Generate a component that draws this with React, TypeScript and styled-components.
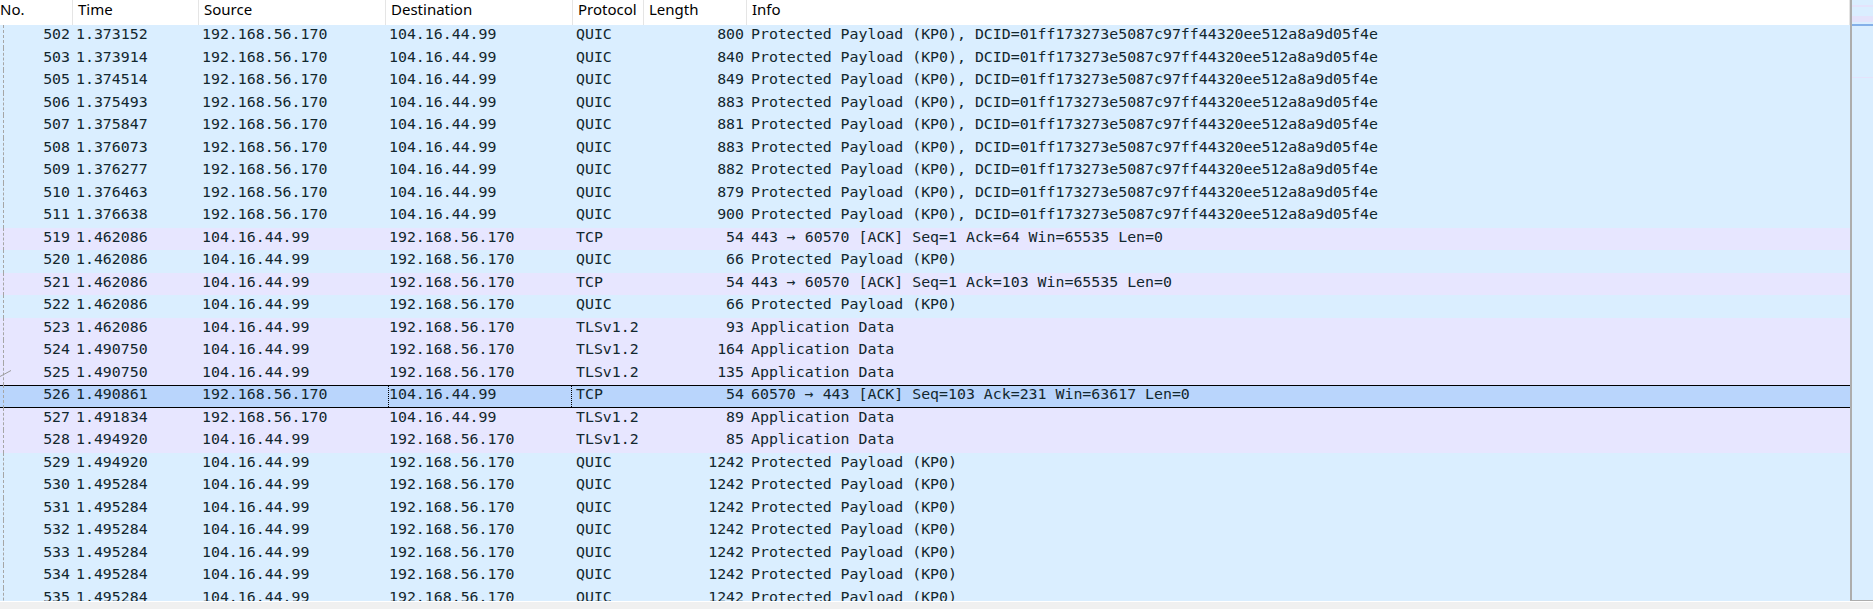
import styled, { createGlobalStyle } from 'styled-components'

const GlobalStyle = createGlobalStyle`
  html, body {
    margin: 0;
    padding: 0;
    background: #ffffff;
  }
  body {
    overflow: hidden;
  }
`

type Kind = 'udp' | 'tcp'

type Packet = {
  no: number
  time: string
  src: string
  dst: string
  proto: string
  len: number
  info: string
}

type Column = {
  key: keyof Packet
  title: string
  width?: number
  align?: 'left' | 'right'
}

const CLIENT = '192.168.56.170'
const SERVER = '104.16.44.99'
const KP0 = 'Protected Payload (KP0)'
const DCID = `${KP0}, DCID=01ff173273e5087c97ff44320ee512a8a9d05f4e`
const APP = 'Application Data'

const columns: Column[] = [
  { key: 'no', title: 'No.', width: 73, align: 'right' },
  { key: 'time', title: 'Time', width: 126 },
  { key: 'src', title: 'Source', width: 187 },
  { key: 'dst', title: 'Destination', width: 187 },
  { key: 'proto', title: 'Protocol', width: 71 },
  { key: 'len', title: 'Length', width: 103, align: 'right' },
  { key: 'info', title: 'Info' },
]

const out = (no: number, time: string, len: number): Packet => ({
  no, time, src: CLIENT, dst: SERVER, proto: 'QUIC', len, info: DCID,
})

const packets: Packet[] = [
  out(502, '1.373152', 800),
  out(503, '1.373914', 840),
  out(505, '1.374514', 849),
  out(506, '1.375493', 883),
  out(507, '1.375847', 881),
  out(508, '1.376073', 883),
  out(509, '1.376277', 882),
  out(510, '1.376463', 879),
  out(511, '1.376638', 900),
  { no: 519, time: '1.462086', src: SERVER, dst: CLIENT, proto: 'TCP', len: 54, info: '443 → 60570 [ACK] Seq=1 Ack=64 Win=65535 Len=0' },
  { no: 520, time: '1.462086', src: SERVER, dst: CLIENT, proto: 'QUIC', len: 66, info: KP0 },
  { no: 521, time: '1.462086', src: SERVER, dst: CLIENT, proto: 'TCP', len: 54, info: '443 → 60570 [ACK] Seq=1 Ack=103 Win=65535 Len=0' },
  { no: 522, time: '1.462086', src: SERVER, dst: CLIENT, proto: 'QUIC', len: 66, info: KP0 },
  { no: 523, time: '1.462086', src: SERVER, dst: CLIENT, proto: 'TLSv1.2', len: 93, info: APP },
  { no: 524, time: '1.490750', src: SERVER, dst: CLIENT, proto: 'TLSv1.2', len: 164, info: APP },
  { no: 525, time: '1.490750', src: SERVER, dst: CLIENT, proto: 'TLSv1.2', len: 135, info: APP },
  { no: 526, time: '1.490861', src: CLIENT, dst: SERVER, proto: 'TCP', len: 54, info: '60570 → 443 [ACK] Seq=103 Ack=231 Win=63617 Len=0' },
  { no: 527, time: '1.491834', src: CLIENT, dst: SERVER, proto: 'TLSv1.2', len: 89, info: APP },
  { no: 528, time: '1.494920', src: SERVER, dst: CLIENT, proto: 'TLSv1.2', len: 85, info: APP },
  { no: 529, time: '1.494920', src: SERVER, dst: CLIENT, proto: 'QUIC', len: 1242, info: KP0 },
  { no: 530, time: '1.495284', src: SERVER, dst: CLIENT, proto: 'QUIC', len: 1242, info: KP0 },
  { no: 531, time: '1.495284', src: SERVER, dst: CLIENT, proto: 'QUIC', len: 1242, info: KP0 },
  { no: 532, time: '1.495284', src: SERVER, dst: CLIENT, proto: 'QUIC', len: 1242, info: KP0 },
  { no: 533, time: '1.495284', src: SERVER, dst: CLIENT, proto: 'QUIC', len: 1242, info: KP0 },
  { no: 534, time: '1.495284', src: SERVER, dst: CLIENT, proto: 'QUIC', len: 1242, info: KP0 },
  { no: 535, time: '1.495284', src: SERVER, dst: CLIENT, proto: 'QUIC', len: 1242, info: KP0 },
]

const SELECTED = 526
const ACKED = 525

const rowColors: Record<Kind, string> = {
  udp: '#daeeff',
  tcp: '#e7e6ff',
}

const kindOf = (p: Packet): Kind => (p.proto === 'QUIC' ? 'udp' : 'tcp')

export default function App() {
  return (
    <>
      <GlobalStyle />
      <Window>
        <Main>
          <PacketList>
            <Header>
              {columns.map((col, i) => (
                <HeaderCell key={col.key} $width={col.width} $first={i === 0}>
                  {col.title}
                </HeaderCell>
              ))}
            </Header>
            <Rows>
              {packets.map(p => (
                <Row key={p.no} $kind={kindOf(p)} $selected={p.no === SELECTED}>
                  {columns.map(col => (
                    <Cell
                      key={col.key}
                      $width={col.width}
                      $align={col.align}
                      $related={col.key === 'no'}
                      $focused={p.no === SELECTED && col.key === 'dst'}
                    >
                      {col.key === 'no' && p.no === ACKED && <AckMark />}
                      {p[col.key]}
                    </Cell>
                  ))}
                </Row>
              ))}
            </Rows>
          </PacketList>
          <Minimap />
        </Main>
        <HScroll />
      </Window>
    </>
  )
}

function AckMark() {
  return (
    <AckSvg width="12" height="22" viewBox="0 0 12 22">
      <line x1="0" y1="13.5" x2="11" y2="7.5" stroke="#9a9a9a" strokeWidth="1" />
    </AckSvg>
  )
}

function Minimap() {
  return (
    <MapBox>
      <svg width="21" height="600" viewBox="0 0 21 600">
        <rect x="0" y="0" width="21" height="600" fill="#daeeff" />
        <rect x="0" y="5" width="21" height="2" fill="#e4e3fb" />
        <rect x="0" y="16" width="21" height="6" fill="#e4e3fb" />
        <rect x="0" y="24.5" width="21" height="1" fill="#2f72d2" />
        <rect x="0" y="77" width="21" height="1" fill="#e4e3fb" />
      </svg>
    </MapBox>
  )
}

const Window = styled.div`
  width: 1873px;
  height: 609px;
  display: flex;
  flex-direction: column;
  overflow: hidden;
  background: #ffffff;
`

const Main = styled.div`
  flex: 0 0 601px;
  display: flex;
  overflow: hidden;
`

const PacketList = styled.div`
  flex: 1;
  min-width: 0;
  display: flex;
  flex-direction: column;
  overflow: hidden;
`

const Header = styled.div`
  flex: 0 0 25px;
  display: flex;
  background: #ffffff;
  font-family: 'Noto Sans', 'Open Sans', sans-serif;
  font-size: 15px;
  line-height: 19px;
  color: #000000;
`

const HeaderCell = styled.div<{ $width?: number; $first?: boolean }>`
  box-sizing: border-box;
  ${({ $width }) => ($width ? `flex: 0 0 ${$width}px;` : 'flex: 1;')}
  padding-left: ${({ $first }) => ($first ? '0' : '5px')};
  border-right: 1px solid #e5e5e5;
  white-space: nowrap;
  overflow: hidden;
`

const Rows = styled.div`
  flex: 1;
  display: flex;
  flex-direction: column;
  overflow: hidden;
  font-family: 'DejaVu Sans Mono', 'Liberation Mono', monospace;
  font-size: 14.88px;
  line-height: 18px;
  color: #12272e;
`

const Row = styled.div<{ $kind: Kind; $selected?: boolean }>`
  flex: 0 0 22.5px;
  height: 22.5px;
  display: flex;
  align-items: flex-start;
  background: ${({ $kind, $selected }) => ($selected ? '#b9d5fc' : rowColors[$kind])};
  box-shadow: ${({ $selected }) =>
    $selected ? 'inset 0 1px 0 #000000, inset 0 -1px 0 #000000' : 'none'};
`

const Cell = styled.div<{
  $width?: number
  $align?: 'left' | 'right'
  $related?: boolean
  $focused?: boolean
}>`
  position: relative;
  box-sizing: border-box;
  ${({ $width }) => ($width ? `flex: 0 0 ${$width}px;` : 'flex: 1;')}
  height: 100%;
  padding: 0 3px;
  text-align: ${({ $align }) => $align ?? 'left'};
  white-space: pre;
  overflow: hidden;

  ${({ $width }) => !$width && 'padding-left: 4px;'}

  ${({ $related }) =>
    $related &&
    `
    &::before {
      content: '';
      position: absolute;
      left: 3px;
      top: 0;
      bottom: 0;
      border-left: 1px dashed #a6a6a6;
    }
  `}

  ${({ $focused }) =>
    $focused &&
    `
    &::after {
      content: '';
      position: absolute;
      left: 2px;
      right: 1px;
      top: 1px;
      bottom: 1px;
      border-left: 1px dotted #000000;
      border-right: 1px dotted #000000;
    }
  `}
`

const AckSvg = styled.svg`
  position: absolute;
  left: 0;
  top: 0;
`

const MapBox = styled.div`
  flex: 0 0 23px;
  box-sizing: border-box;
  border-left: 2px solid #adadad;
  border-bottom: 1px solid #adadad;
  background: #daeeff;
  overflow: hidden;

  svg {
    display: block;
  }
`

const HScroll = styled.div`
  flex: 0 0 8px;
  box-sizing: border-box;
  border-top: 1px solid #ffffff;
  background: #f0f0f0;
`
